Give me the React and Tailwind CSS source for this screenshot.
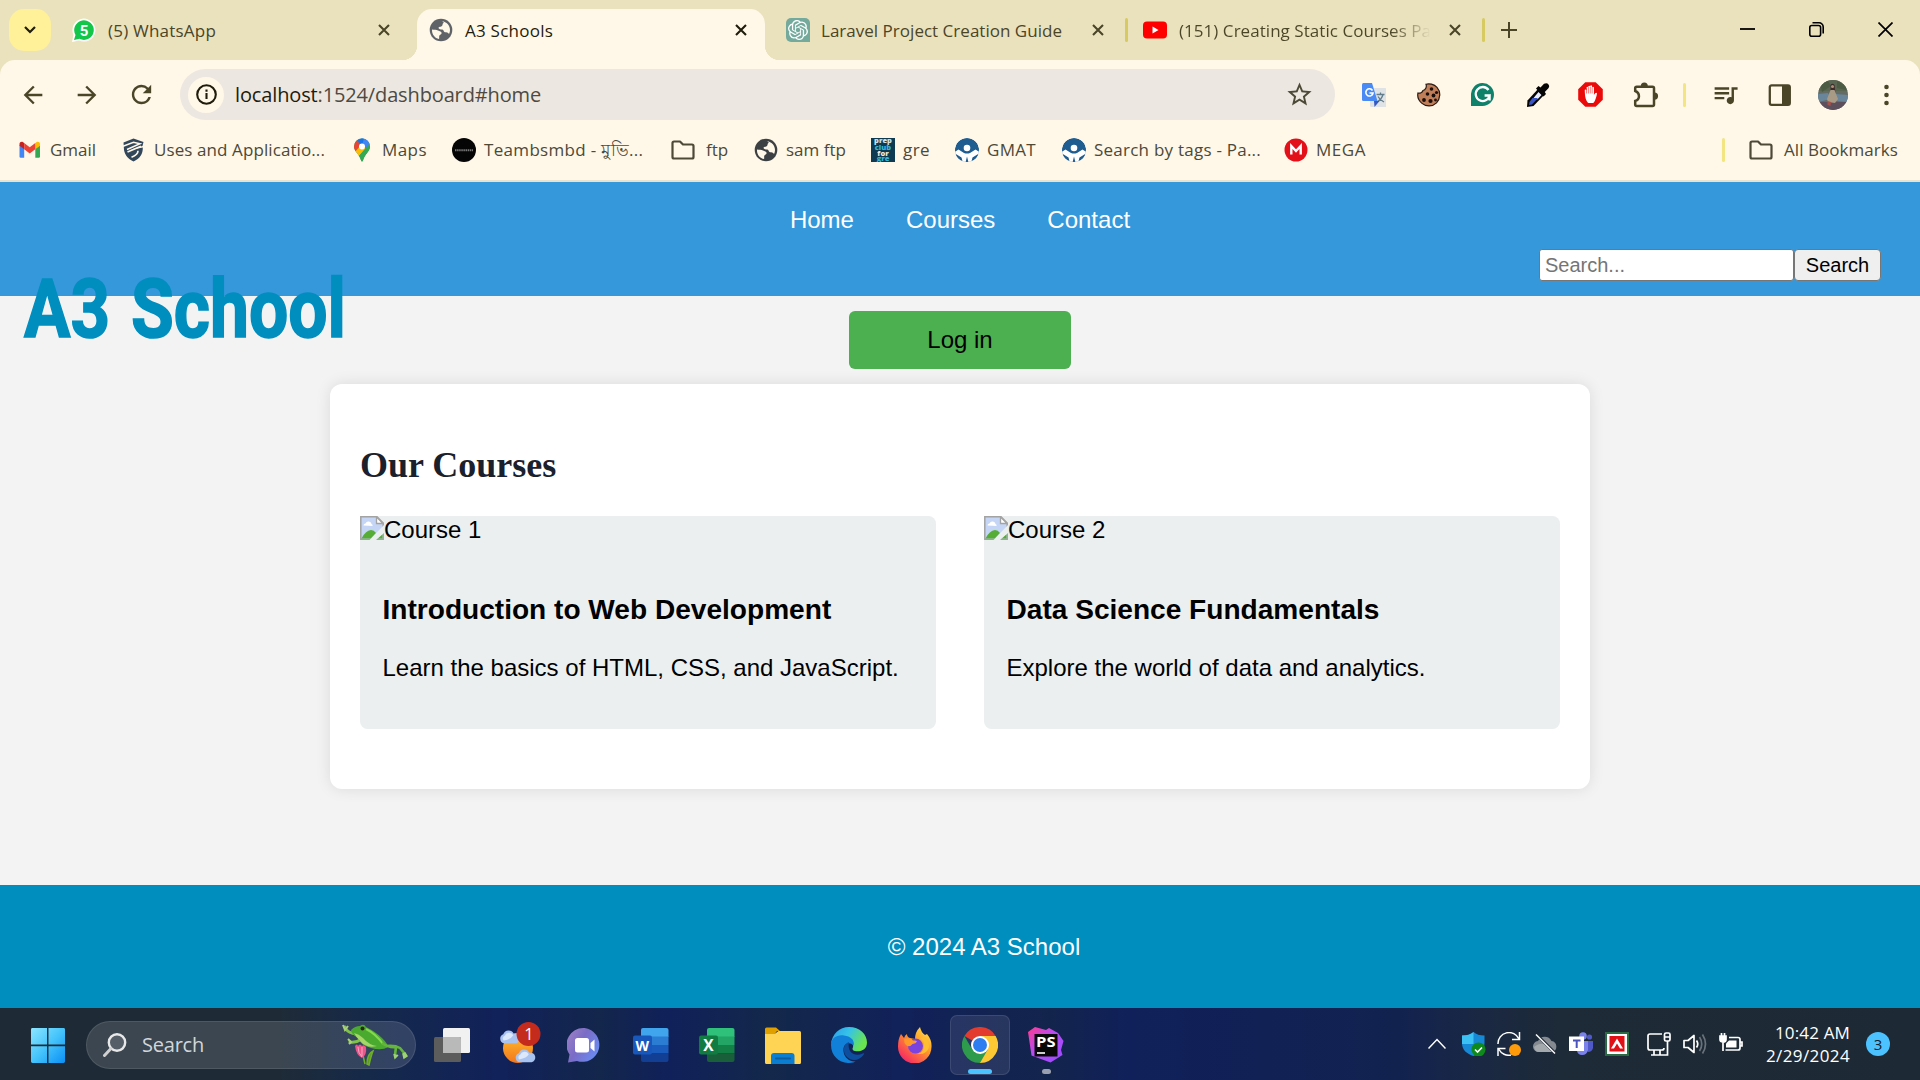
import React, { useLayoutEffect, useRef } from "react";
import {
  MdArrowBack,
  MdArrowForward,
  MdRefresh,
  MdStarBorder,
  MdQueueMusic,
} from "react-icons/md";
import { SiOpenai } from "react-icons/si";

/* Single line of text whose tracking is adjusted so that it spans `w` pixels. */
function Line({ w, className = "", children }) {
  const ref = useRef(null);
  useLayoutEffect(() => {
    const el = ref.current;
    el.style.letterSpacing = "0px";
    const natural = el.getBoundingClientRect().width;
    const count = Array.from(el.textContent).length;
    el.style.letterSpacing = (w - natural) / count + "px";
  }, [w]);
  return (
    <span ref={ref} className={"inline-block whitespace-nowrap " + className}>
      {children}
    </span>
  );
}

function Cross({ className = "", dark }) {
  return (
    <svg className={"h-3 w-3 shrink-0 " + className} viewBox="0 0 12 12" fill="none">
      <path d="M1 1l10 10M11 1L1 11" stroke={dark ? "#1f1c0c" : "#4b4528"} strokeWidth="2.1" />
    </svg>
  );
}

function Globe({ color, hole }) {
  return (
    <svg className="h-6 w-6 shrink-0" viewBox="0 0 24 24">
      <circle cx="12" cy="12" r="11.300" fill={color} />
      <path d="M13 3.200c4.500.5 8 4 8 8.800 0 1.500-.5 3-1 4-1-1.800-2.500-1.500-4-1.700-1.500-.3-1-2.300-2.700-2.700-1.800-.3-3.300-.3-3.800-1.600 0-1.600 2.500-1 3.500-2 .8-1 .3-2.300 1.500-3 .8-.5-.3-1.300-1.500-1.800z" fill={hole} />
      <path d="M3 11.500c2 .3 4.500 0 6 1 1.600 1 3.500.8 3.600 2.500 0 1.500-1.800 1.500-2.300 2.700-.4 1.200.2 2.300-.3 3.300-4-.8-7.300-4.500-7-9.500z" fill={hole} />
    </svg>
  );
}

function Folder() {
  return (
    <svg className="h-6 w-6 shrink-0" viewBox="0 0 24 24" fill="none">
      <path
        d="M1.500 5q0-1.500 1.500-1.500h6l3 3h9q1.500 0 1.500 1.500v11q0 1.500-1.500 1.500H3q-1.500 0-1.500-1.500z"
        stroke="#4d4937"
        strokeWidth="2.2"
        strokeLinejoin="round"
      />
    </svg>
  );
}

function GmailIcon() {
  return (
    <svg className="h-6 w-6 shrink-0" viewBox="0 0 24 24">
      <path d="M1.500 7v11.500q0 1.200 1.200 1.200H6.200V10.500z" fill="#4285f4" />
      <path d="M22 7v11.500q0 1.200-1.200 1.200H17.300V10.500z" fill="#34a853" />
      <path d="M17.300 5v6.200L22 7.700V6c0-2.200-2.400-2.700-3.600-1.800z" fill="#fbbc04" />
      <path d="M6.200 5v6.200L1.500 7.700V6c0-2.200 2.400-2.700 3.600-1.800z" fill="#c5221f" />
      <path d="M6.200 11.200V5l5.500 4.200L17.300 5v6.200l-5.600 4.200z" fill="#ea4335" />
    </svg>
  );
}

function ShieldBookmark() {
  return (
    <svg className="h-6 w-6 shrink-0" viewBox="0 0 24 24" fill="none">
      <path d="M1.500 4.500L11.500 .5 21.500 4l-1 4L8 12l12.800-2.500c.2 6.500-2.800 11-9.300 14-5-2.500-8.500-6-9.500-11.500z" fill="#33475b" />
      <path d="M1 8.200L11.500 4.300l6.500 1.500L5 11.500" stroke="#fff7e8" strokeWidth="1.500" />
      <path d="M19 8.200L5.500 14M16 12.800q0 4-6.500 6.500" stroke="#fff7e8" strokeWidth="1.700" />
    </svg>
  );
}

function MapsPin() {
  return (
    <svg className="h-6 w-6 shrink-0" viewBox="0 0 24 24">
      <defs>
        <clipPath id="pin">
          <path d="M12 0.500a8 8 0 0 1 8 8c0 5-5 7-7 13.700q-1 2.600-2 0C9 15.500 4 13.500 4 8.500a8 8 0 0 1 8-8z" />
        </clipPath>
      </defs>
      <g clipPath="url(#pin)">
        <rect width="24" height="24" fill="#34a853" />
        <path d="M6 0L20 0 22 5 13 12z" fill="#4285f4" />
        <path d="M3 0L7 2.500 12 8 3 18z" fill="#ea4335" />
        <path d="M7 2.500L12 0h2L12 8z" fill="#1a73e8" />
        <path d="M3 16l8-9 5 4-9 9z" fill="#fbbc04" />
        <path d="M8 19L20 5v20H9z" fill="#34a853" />
        <circle cx="12" cy="8.500" r="3" fill="#fff" />
      </g>
    </svg>
  );
}

function TeamIcon() {
  return (
    <svg className="h-6 w-6 shrink-0" viewBox="0 0 24 24">
      <circle cx="12" cy="12" r="12" fill="#050505" />
      <path d="M3 12.200h18" stroke="#777" strokeWidth="2" strokeDasharray="1.500 .6" />
    </svg>
  );
}

function GreIcon() {
  return (
    <svg className="h-6 w-6 shrink-0" viewBox="0 0 24 24" fontFamily="Open Sans" fontWeight="800" fontSize="7.500" textAnchor="middle">
      <rect width="24" height="24" fill="#0e3a52" />
      <text x="12" y="5" fill="#cfe0e4">prep</text>
      <text x="12" y="11.500" fill="#35b4d8">club</text>
      <text x="12" y="17.500" fill="#e4ecdf">for</text>
      <text x="12" y="22.500" fill="#35b4d8">gre</text>
    </svg>
  );
}

function GmatIcon() {
  return (
    <svg className="h-6 w-6 shrink-0" viewBox="0 0 24 24">
      <defs>
        <clipPath id="gm">
          <circle cx="12" cy="12" r="12" />
        </clipPath>
      </defs>
      <g clipPath="url(#gm)">
        <circle cx="12" cy="12" r="12" fill="#1f5c8f" />
        <circle cx="12" cy="10" r="3.300" fill="#fff" />
        <path d="M-1 14.500l4.500-3L9 15q3 1.200 6 0l5.500-3.500 4.500 3V15l-7.500 4.500L16 25H8l-1.500-5.500L-1 15z" fill="#fff" />
        <path d="M-1 15.500l7 4.500.5 5H-1zM25 15.500L18 20l-.5 5H25z" fill="#1f5c8f" />
        <path d="M12 18.500l1.500 6h-3z" fill="#1f5c8f" />
      </g>
    </svg>
  );
}

function MegaIcon() {
  return (
    <svg className="h-6 w-6 shrink-0" viewBox="0 0 24 24">
      <circle cx="12" cy="12" r="11.500" fill="#e3101a" />
      <path d="M7.300 16.500V8l4.700 5 4.700-5v8.500" fill="none" stroke="#fff" strokeWidth="2.400" />
    </svg>
  );
}

const bookmarks = [
  { icon: <GmailIcon />, box: "w-[104px]", label: "Gmail", w: 46 },
  { icon: <ShieldBookmark />, box: "w-[228px]", label: "Uses and Applicatio...", w: 171 },
  { icon: <MapsPin />, box: "w-[102px]", label: "Maps", w: 45 },
  { icon: <TeamIcon />, box: "w-[219px]", label: "Teambsmbd - মুভি...", w: 160 },
  { icon: <Folder />, box: "w-[83px]", label: "ftp", w: 22, gap: "gap-[11px]" },
  { icon: <Globe color="#3c4043" hole="#fff8e9" />, box: "w-[117px]", label: "sam ftp", w: 60 },
  { icon: <GreIcon />, box: "w-[84px]", label: "gre", w: 27 },
  { icon: <GmatIcon />, box: "w-[107px]", label: "GMAT", w: 49 },
  { icon: <GmatIcon />, box: "w-[222px]", label: "Search by tags - Pa...", w: 167 },
  { icon: <MegaIcon />, box: "w-[120px]", label: "MEGA", w: 50 },
];

function TabStrip() {
  return (
    <div className="flex h-[60px] bg-[#eae2bd] text-[17px] text-[#4b4528]">
      <div className="mt-[9px] ml-[9px] flex h-[42px] w-[42px] items-center justify-center rounded-[15px] bg-[#fff09a]">
        <svg className="h-3 w-3" viewBox="0 0 12 12" fill="none">
          <path d="M1 3l5 5 5-5" stroke="#1f1c0c" strokeWidth="2.200" />
        </svg>
      </div>
      <div className="flex w-[366px] items-center pl-[21px]">
        <svg className="h-6 w-6 shrink-0" viewBox="0 0 24 24">
          <path d="M0 24L1.500 17A11.500 11.500 0 1 1 7 22.500z" fill="#fff" />
          <path d="M2 22L3.500 17A9.800 9.800 0 1 1 7.500 20.800z" fill="#13c648" />
          <text x="12" y="17.500" textAnchor="middle" fontSize="15" fontWeight="700" fontFamily="Roboto" fill="#fff">5</text>
        </svg>
        <span className="ml-3 flex-1 pt-[2px]"><Line w={108}>(5) WhatsApp</Line></span>
        <Cross className="mr-[27px]" />
      </div>
      <div className="relative mt-[9px] flex w-[348px] items-center rounded-t-[15px] bg-[#fff8e9] pb-[9px] pl-[12px] text-[#1f1c0c]">
        <span className="absolute bottom-0 -left-[15px] h-[15px] w-[15px] bg-[radial-gradient(circle_at_0_0,transparent_15px,#fff8e9_15.5px)]" />
        <span className="absolute -right-[15px] bottom-0 h-[15px] w-[15px] bg-[radial-gradient(circle_at_100%_0,transparent_15px,#fff8e9_15.5px)]" />
        <Globe color="#5f6368" hole="#fff8e9" />
        <span className="ml-[12px] flex-1 pt-[2px]"><Line w={88}>A3 Schools</Line></span>
        <Cross className="mr-[18px]" dark />
      </div>
      <div className="flex w-[363px] items-center pl-[21px]">
        <span className="flex h-6 w-6 shrink-0 items-center justify-center rounded-l-[5px] rounded-tr-[5px] bg-[#74aa9c]">
          <SiOpenai className="h-5 w-5 text-white" />
        </span>
        <span className="ml-[11px] flex-1 pt-[2px]"><Line w={241}>Laravel Project Creation Guide</Line></span>
        <Cross className="mr-[21px]" />
        <span className="h-6 w-[3px] rounded bg-[#d8ca62]" />
      </div>
      <div className="flex w-[357px] items-center pl-[15px]">
        <svg className="h-6 w-6 shrink-0" viewBox="0 0 24 24">
          <rect y="3.500" width="24" height="17" rx="4" fill="#f00" />
          <path d="M9.500 8.500v7l6-3.500z" fill="#fff" />
        </svg>
        <span className="ml-3 w-[252px] overflow-hidden bg-[linear-gradient(90deg,#4b4528_84%,transparent_100%)] bg-clip-text pt-[2px] text-transparent">
          <Line w={252}>(151) Creating Static Courses Pa</Line>
        </span>
        <Cross className="ml-[18px]" />
        <span className="ml-[21px] h-6 w-[3px] rounded bg-[#d8ca62]" />
      </div>
      <svg className="mt-[22px] ml-[16px] h-4 w-4" viewBox="0 0 16 16">
        <path d="M8 0v16M0 8h16" stroke="#4b4528" strokeWidth="2" />
      </svg>
      <div className="ml-auto flex h-[58px] items-center gap-[54px] pr-[27px]">
        <svg className="h-[15px] w-[15px]" viewBox="0 0 15 15"><path d="M0 7h15" stroke="#000" strokeWidth="1.800" /></svg>
        <svg className="h-[15px] w-[15px] overflow-visible" viewBox="0 0 15 15" fill="none" stroke="#000" strokeWidth="1.600">
          <rect x=".8" y="3.500" width="10.800" height="10.800" rx="2" />
          <path d="M3.500 .8H10a4.200 4.200 0 0 1 4.200 4.200v6.500" />
        </svg>
        <svg className="h-[15px] w-[15px]" viewBox="0 0 15 15"><path d="M.5 .5l14 14M14.500 .5l-14 14" stroke="#000" strokeWidth="1.700" /></svg>
      </div>
    </div>
  );
}

function Extensions() {
  return (
    <>
      <svg className="ml-[27px] h-6 w-6 shrink-0" viewBox="0 0 24 24">
        <rect x="8" y="5" width="16.500" height="19" rx="1.500" fill="#dfe3e6" />
        <path d="M14.500 11.500h8M18.500 9.500v2M21 11.500c-1 4-3.500 6-6 7.500M16 13.500c1 2 3 4 6 5.500" stroke="#607d8b" strokeWidth="1.300" fill="none" />
        <path d="M1.500 0H10l5.500 18H1.500Q0 18 0 16.500v-15Q0 0 1.500 0z" fill="#4a8af4" />
        <path d="M12 18h5.500l-5 6z" fill="#3457c0" />
        <path d="M10.500 7.500A3.600 3.600 0 1 0 11 10H7.500" stroke="#fff" strokeWidth="1.600" fill="none" />
      </svg>
      <svg className="ml-[31px] h-6 w-6 shrink-0" viewBox="0 0 24 24">
        <path d="M9 1.200c3-1 8-.2 11 3.200 4 4.500 3.500 11-.5 15.500-4 4-10.500 4-14.500.5C1 17 .3 13 1 10c2 .5 4.500-.5 5-2.500C8.500 7 10 4 9 1.200z" fill="#c07f58" stroke="#2a1a14" strokeWidth="1.200" />
        <g fill="#1a0f0b">
          <circle cx="14.500" cy="6" r="1.800" /><circle cx="19.500" cy="9.500" r="1.600" /><circle cx="10.500" cy="11" r="1.800" />
          <circle cx="16.500" cy="12.500" r="1.900" /><circle cx="7" cy="17" r="1.900" /><circle cx="13.500" cy="18" r="2.100" /><circle cx="18.500" cy="17" r="1.400" />
        </g>
      </svg>
      <svg className="ml-[30px] h-6 w-6 shrink-0" viewBox="0 0 24 24">
        <path d="M0 23V12A11.500 11.500 0 1 1 11.500 23z" fill="#0f806a" />
        <path d="M17.500 7A7 7 0 1 0 18.600 12.500h-5M18.600 12.500v5" stroke="#fff" strokeWidth="2.300" fill="none" />
      </svg>
      <svg className="ml-[31px] h-6 w-6 shrink-0" viewBox="0 0 24 24">
        <path d="M12.500 5.500l6 6-11 11.500L1 24l.5-6.500z" fill="#050505" />
        <path d="M12.500 9l3 3-4 4.200H6.500z" fill="#e8ecff" />
        <path d="M6.500 15h5.500L6 21.500l-3 .5.500-3z" fill="#3a55c8" />
        <path d="M10 5.500L12.500 3l2 1.500L18 .8q3-1.500 4.500.7 1.500 2-.3 4L18.800 9l1.200 2-2.500 2.500z" fill="#050505" />
      </svg>
      <svg className="ml-[28px] h-[25px] w-[25px] shrink-0" viewBox="0 0 24 24">
        <path d="M7 .2h10L23.800 7v10L17 23.800H7L.2 17V7z" fill="#ea0a0a" />
        <path d="M6.500 7.500q1.200-.8 1.700.3V5q.9-1 1.700 0V4q1-1 1.800 0v-.3q1-1 1.800 0V5q1-1 1.800 0v7.500q1.500-2.800 3-1.800c-.5 3-1.800 8-3.800 9.500H10C7.500 18.500 6.500 14 6.500 7.500z" fill="#fff" />
        <path d="M8.200 6v5M10 5v6M11.800 4.500v6.500M13.600 5v6" stroke="#ea0a0a" strokeWidth=".5" />
      </svg>
      <svg className="ml-[30px] h-[26px] w-[27px] shrink-0" viewBox="0 0 27 26" fill="none">
        <path d="M2.200 9V6.200q0-1.500 1.500-1.500H19.500q1.500 0 1.500 1.500V22.500q0 1.500-1.500 1.500H3.700q-1.500 0-1.500-1.500V19c5-1.500 5-8 0-10z" stroke="#4b4528" strokeWidth="2.500" />
        <path d="M7.800 4a3.500 3.500 0 0 1 7 0zM21.500 10.500a3.600 3.600 0 0 1 0 7.200z" fill="#4b4528" />
      </svg>
      <span className="ml-[23px] h-6 w-[3px] shrink-0 rounded bg-[#f2e582]" />
      <MdQueueMusic className="ml-[25px] h-[29px] w-[29px] shrink-0 text-[#4b4528]" />
      <svg className="ml-[28px] h-6 w-6 shrink-0" viewBox="0 0 24 24" fill="none">
        <rect x="1.800" y="2.300" width="20" height="19.500" rx="1.800" stroke="#4b4528" strokeWidth="2.300" />
        <path d="M14 2.500h7.500v19H14z" fill="#4b4528" />
      </svg>
      <svg className="ml-[26px] h-[30px] w-[30px] shrink-0" viewBox="0 0 30 30">
        <defs>
          <clipPath id="av"><circle cx="15" cy="15" r="15" /></clipPath>
        </defs>
        <g clipPath="url(#av)">
          <rect width="30" height="30" fill="#636b62" />
          <path d="M0 0h30v11H0z" fill="#5a6652" />
          <path d="M2 3l8-2 3 5-9 6zM19 1l9 4v5l-9-2z" fill="#4c5c44" />
          <path d="M0 14l10-1 3 6-13 3zM18 14l12 1v7l-12-1z" fill="#68859a" />
          <path d="M0 22h30v8H0z" fill="#5d4f5c" />
          <path d="M12.500 5q2-2.500 4 0l1 9h-5z" fill="#3c2b2a" />
          <circle cx="14.500" cy="6.500" r="1.500" fill="#b58d75" />
          <path d="M12.500 10h4l3.500 9-3 4-7-1-1-3z" fill="#a99a86" />
          <path d="M9.500 21l3.500 1-.5 4-3-1z" fill="#a4524a" />
        </g>
      </svg>
      <svg className="ml-[36px] h-6 w-[5px] shrink-0" viewBox="0 0 5 24" fill="#4b4528">
        <circle cx="2.500" cy="4" r="2.300" /><circle cx="2.500" cy="12" r="2.300" /><circle cx="2.500" cy="20" r="2.300" />
      </svg>
    </>
  );
}

function Toolbar() {
  return (
    <div className="flex h-[60px] items-start bg-[#eae2bd]">
      <div className="flex h-[60px] w-full items-center rounded-t-[15px] bg-[#fff8e9] pt-[9px]">
        <MdArrowBack className="ml-[19px] h-[28px] w-[28px] shrink-0 text-[#4b4528]" />
        <MdArrowForward className="ml-[26px] h-[28px] w-[28px] shrink-0 text-[#4b4528]" />
        <MdRefresh className="ml-[26px] h-[29px] w-[29px] shrink-0 text-[#4b4528]" />
        <div className="ml-[24px] flex h-[51px] w-[1155px] shrink-0 items-center rounded-full bg-[#ece7e0]">
          <span className="ml-2 flex h-9 w-9 items-center justify-center rounded-full bg-[#fff8e9]">
            <svg className="h-[21px] w-[21px]" viewBox="0 0 21 21" fill="none">
              <circle cx="10.500" cy="10.500" r="9.300" stroke="#1f1c0c" strokeWidth="2.100" />
              <path d="M10.500 9v6M10.500 5.500v2.200" stroke="#1f1c0c" strokeWidth="2.100" />
            </svg>
          </span>
          <span className="ml-[11px] flex-1 text-[20px] text-[#4d4a44]">
            <Line w={306}><span className="text-[#1f1c0c]">localhost</span>:1524/dashboard#home</Line>
          </span>
          <MdStarBorder className="mr-[21px] h-[29px] w-[29px] text-[#4d4937]" />
        </div>
        <Extensions />
      </div>
    </div>
  );
}

function Bookmarks() {
  return (
    <div className="flex h-[62px] items-center border-b-2 border-[#e8e2cf] bg-[#fff8e9] pl-[18px] text-[17px] text-[#4d4937]">
      {bookmarks.map((b, i) => (
        <div key={i} className={"flex shrink-0 items-center " + b.box + " " + (b.gap || "gap-[8px]")}>
          {b.icon}
          <Line w={b.w}>{b.label}</Line>
        </div>
      ))}
      <span className="ml-auto h-6 w-[3px] rounded bg-[#f2e582]" />
      <div className="ml-[24px] flex items-center gap-[11px] pr-[22px]">
        <Folder />
        <Line w={114}>All Bookmarks</Line>
      </div>
    </div>
  );
}

function BrokenImage() {
  return (
    <svg className="h-6 w-6 shrink-0" viewBox="0 0 24 24">
      <path d="M.8 .8H17l6.200 6.200v16.200H.8z" fill="#c5d5f5" stroke="#a3a3a3" strokeWidth="1.500" />
      <path d="M16.500 1v6.500H23z" fill="#fff" stroke="#a3a3a3" strokeWidth="1.300" />
      <path d="M3.500 9.500q0-2 2-2 1-2.500 3.500-2t2.500 2.500q1.500.5 1 2z" fill="#fff" />
      <path d="M1.500 22.500q4-8 9.500-8.500 3 0 5 3l-5 5.500zM16.500 22.500l6-4.500v4.500z" fill="#55ad35" />
      <path d="M24 9L9.500 24H16L24 17z" fill="#ebeff0" />
    </svg>
  );
}

function Course({ alt, title, text }) {
  return (
    <div className="h-[213px] w-[576px] rounded-[7.5px] bg-[#ebeff0]">
      <div className="flex h-6 leading-[27px]">
        <BrokenImage />
        {alt}
      </div>
      <h3 className="mt-[54px] pl-[22.5px] text-[28.08px] leading-[32px] font-bold">{title}</h3>
      <p className="mt-[28px] pl-[22.5px] leading-[28px]">{text}</p>
    </div>
  );
}

function Page() {
  return (
    <div className="relative flex h-[826px] flex-col items-center bg-[#f3f3f3] font-['Liberation_Sans',Arial,sans-serif] text-[24px] leading-[28px] text-black">
      <header className="flex h-[114px] w-full flex-col items-center bg-[#3498db]">
        <nav className="mt-[24px] flex gap-[52px] text-white">
          <span>Home</span>
          <span>Courses</span>
          <span>Contact</span>
        </nav>
        <div className="mt-[15px] mr-[39px] flex h-[32px] self-end text-[20px] leading-[31px]">
          <div className="w-[255px] rounded-[3px] border-[1.5px] border-[#767676] bg-white pl-[5px] text-[#757575]">Search...</div>
          <div className="w-[87px] rounded-[4px] border-[1.5px] border-[#767676] bg-[#efefef] text-center">Search</div>
        </div>
      </header>
      <svg
        className="absolute top-[70px] left-0 h-[110px] w-[360px] overflow-visible"
        viewBox="0 -10 360 110"
        fill="#008ebf"
        stroke="#008ebf"
        strokeWidth="1.600"
        fontFamily="Roboto, sans-serif"
        fontWeight="700"
        fontSize="82"
      >
        <text x="24" y="75" textLength="86" lengthAdjust="spacingAndGlyphs">A3</text>
        <text x="131" y="75" textLength="215" lengthAdjust="spacingAndGlyphs">School</text>
      </svg>
      <div className="mt-[15px] flex h-[58px] w-[222px] items-center justify-center rounded-[6px] bg-[#4caf50]">Log in</div>
      <main className="mt-[15px] h-[405px] w-[1260px] rounded-[12px] bg-white px-[30px] shadow-[0_0_15px_rgba(0,0,0,0.1)]">
        <h2 className="mt-[60px] font-['Liberation_Serif','Times_New_Roman',serif] text-[36px] leading-[42px] font-bold text-[#1a202c]">Our Courses</h2>
        <div className="mt-[30px] flex gap-[48px]">
          <Course alt="Course 1" title="Introduction to Web Development" text="Learn the basics of HTML, CSS, and JavaScript." />
          <Course alt="Course 2" title="Data Science Fundamentals" text="Explore the world of data and analytics." />
        </div>
      </main>
      <footer className="mt-auto flex h-[123px] w-full items-center justify-center bg-[#008ebf] pl-[48px] text-white">© 2024 A3 School</footer>
    </div>
  );
}

function Frog() {
  return (
    <svg className="h-[42px] w-[66px] shrink-0" viewBox="0 0 66 42">
      <path d="M23 40L20 27M27 41q2-9 4-14-6 3-6 13z" fill="#5d9a21" stroke="#6fae2a" strokeWidth="1.500" />
      <path d="M13 22q2-3 3 0 2-3 4 0 2-2 4 1 1 8-4 11-6-3-7-12z" fill="#e9568a" />
      <path d="M16 23q0 6 4 10M20 23v9" stroke="#f7a6c3" strokeWidth="1" fill="none" />
      <path d="M3 3q2 5 7 6t9 3M8 18q6 1 12-3" stroke="#7fc24b" strokeWidth="3" fill="none" strokeLinecap="round" />
      <path d="M1 1l2 5 3-4M6 15l3 3-2 2" stroke="#a9cf7a" strokeWidth="2" fill="none" />
      <path d="M9 6q4-4 9-4 4-3 6 1 10 5 16 11t6 9q-6 4-17 1T16 14Q9 10 9 6z" fill="#4aa92f" />
      <path d="M12 9q5 1 9 5 6 7 14 8-10 3-17-5-4-4-6-8z" fill="#a5d66c" />
      <path d="M24 5q10 5 17 15" stroke="#86d84e" strokeWidth="2" fill="none" />
      <circle cx="20.500" cy="4.500" r="2" fill="#2b2a17" />
      <path d="M40 19q7 5 14 4l-1 8M44 22q9-1 14 2l5 6" stroke="#63b63a" strokeWidth="2.600" fill="none" strokeLinejoin="round" />
      <path d="M52 30l1 4 3-3M61 30l1 4 3-2-2-3z" fill="#9fd277" stroke="#9fd277" strokeWidth="1.500" />
    </svg>
  );
}

function Cloud({ x, y, s }) {
  return (
    <g transform={`translate(${x} ${y}) scale(${s})`}>
      <path d="M5 14a5 5 0 0 1-.5-9.500A6 6 0 0 1 15.500 4a5 5 0 0 1 2.500 10z" fill="#a9c3f0" />
      <path d="M5 11a3 3 0 0 1 1-5A5 5 0 0 1 15 5.500q-2 4-10 5.500z" fill="#dde8fb" />
    </g>
  );
}

function Office({ letter, c, badge }) {
  return (
    <svg className="h-9 w-9 shrink-0" viewBox="0 0 36 36">
      <path d="M8 3q0-2 2-2h23.500q2 0 2 2v7H8z" fill={c[0]} />
      <path d="M8 9.500h27.500V18H8z" fill={c[1]} />
      <path d="M8 18h27.500v8.500H8z" fill={c[2]} />
      <path d="M8 26.500h27.500V33q0 2-2 2H10q-2 0-2-2z" fill={c[3]} />
      <rect y="8.500" width="19" height="19" rx="2" fill={badge} />
      <text x="9.300" y="23.500" textAnchor="middle" fontFamily="Open Sans" fontWeight="700" fontSize={letter === "W" ? "14" : "15.500"} fill="#fff">{letter}</text>
    </svg>
  );
}

function Taskbar() {
  return (
    <div className="flex h-[72px] items-center bg-[linear-gradient(90deg,#1e2b36_0px,#1e2b37_280px,#15294a_370px,#11215a_500px,#13264b_600px,#10205a_670px,#13284a_770px,#11215a_900px,#13244c_1050px,#10205a_1130px,#12224f_1400px,#1a2843_1480px,#1d2a37_1560px,#1d2a36_1920px)] text-white">
      <div className="flex shrink-0 items-center pt-[2px]">
        <svg className="ml-[31px] h-[35px] w-[34px] shrink-0" viewBox="0 0 35 36">
          <defs>
            <linearGradient id="win" x1="0" y1="0" x2="1" y2="1">
              <stop offset="0" stopColor="#8de6ff" /><stop offset=".5" stopColor="#45c4fb" /><stop offset="1" stopColor="#0a90f5" />
            </linearGradient>
          </defs>
          <path d="M1.500 0H16.500V17H0V1.500Q0 0 1.500 0zM18 0H33.500Q35 0 35 1.500V17H18zM0 18.700H16.500V36H1.500Q0 36 0 34.500zM18 18.700H35V34.500Q35 36 33.500 36H18z" fill="url(#win)" />
        </svg>
        <div className="ml-[21px] flex h-[48px] w-[330px] shrink-0 items-center rounded-full border border-white/10 bg-white/[0.13]">
          <svg className="ml-[16px] h-[24px] w-[24px]" viewBox="0 0 24 24" fill="none">
            <circle cx="14" cy="9.500" r="8.200" stroke="#e8e8e8" strokeWidth="2.400" fill="#ffffff22" />
            <path d="M8 15.500L1.500 22.500" stroke="#d0d0d0" strokeWidth="3" strokeLinecap="round" />
          </svg>
          <span className="ml-[15px] flex-1 text-[20px] text-[#d3d6d9]"><Line w={62}>Search</Line></span>
          <div className="mr-[7px]"><Frog /></div>
        </div>
        <svg className="ml-[18px] h-9 w-9 shrink-0" viewBox="0 0 36 36">
          <rect x="9" y="1" width="27" height="25" rx="1.500" fill="#f1f1f1" />
          <rect y="10" width="27" height="25" rx="1.500" fill="#5c5c5c" />
          <path d="M9 10h16.500q1.500 0 1.500 1.500V26H9z" fill="#b9b9b9" />
        </svg>
        <svg className="-mt-[3px] ml-[30px] h-[44px] w-[44px] shrink-0" viewBox="0 0 44 44">
          <defs>
            <linearGradient id="sun" x1="0" y1="0" x2="0" y2="1"><stop offset="0" stopColor="#ffc02e" /><stop offset="1" stopColor="#f3761e" /></linearGradient>
          </defs>
          <circle cx="18" cy="26" r="15" fill="url(#sun)" />
          <Cloud x="-1" y="8" s="0.950" />
          <Cloud x="14.500" y="27" s="0.950" />
          <circle cx="28.500" cy="12" r="12" fill="#c42b1c" />
          <text x="29" y="18" textAnchor="middle" fontFamily="Open Sans" fontSize="16.500" fill="#fff">1</text>
        </svg>
        <svg className="ml-[23px] h-[36px] w-[36px] shrink-0" viewBox="0 0 36 36">
          <defs>
            <linearGradient id="chat" x1="0" y1="0" x2="1" y2=".6"><stop offset="0" stopColor="#a184c4" /><stop offset=".5" stopColor="#7a6cc6" /><stop offset="1" stopColor="#6a8af0" /></linearGradient>
          </defs>
          <path d="M17.500 1a17 17 0 1 1-7.500 33L1 35.500l1.500-8A17 17 0 0 1 17.500 1z" fill="url(#chat)" />
          <rect x="8" y="11" width="14" height="14.500" rx="2.500" fill="#fff" />
          <path d="M23.500 16l4-3.500v12l-4-3.500z" fill="#fff" />
        </svg>
        <div className="ml-[30px]"><Office letter="W" c={["#41a5ee", "#2b7cd3", "#1a5cbe", "#123f93"]} badge="#1858bd" /></div>
        <div className="ml-[30px]"><Office letter="X" c={["#2fc07a", "#22a565", "#138046", "#19603a"]} badge="#117c41" /></div>
        <svg className="ml-[30px] h-[37px] w-[36px] shrink-0" viewBox="0 0 36 37">
          <path d="M0 2Q0 .5 1.500 .5H11l4 3.500h-3L9 8H0z" fill="#e0a000" />
          <path d="M0 7h9.500l4-3H34.500Q36 4 36 5.500V35.500Q36 37 34.500 37H1.500Q0 37 0 35.500z" fill="#ffd353" />
          <path d="M6 37v-8q0-3 3-3h17.500q3 0 3 3v8z" fill="#0b7ed2" />
          <path d="M11 31.500h14" stroke="#0a5ca3" strokeWidth="2" strokeLinecap="round" />
        </svg>
        <svg className="ml-[30px] h-[36px] w-[36px] shrink-0" viewBox="0 0 36 36">
          <defs>
            <linearGradient id="ed" x1="0" y1="0" x2="1" y2=".4"><stop offset="0" stopColor="#2c9bea" /><stop offset=".5" stopColor="#36c3e8" /><stop offset="1" stopColor="#69e54f" /></linearGradient>
          </defs>
          <path d="M0 17C1 7 8.500 0 18 0c11 0 18 7.500 18 15.500 0 6-4.500 8.800-9.500 8.800-4 0-6-1.500-4.500-4C23 17 20 12.500 14 12 6 11 1 14 0 17z" fill="url(#ed)" />
          <path d="M0 18C0 11 6 7.500 13 8.500c8 1 11 6 9.500 10-5-5-11-1-10 6C13.500 32 21 36 26 34 14 40 0 32 0 18z" fill="#1080d8" />
          <path d="M18 15c-6 2-7 10-2 15 5 5 13 3.500 16.800-2.500.6-1-.3-1.400-1-1-9 4-16-2-13.800-11.500z" fill="#0d4f9e" />
        </svg>
        <svg className="ml-[30px] h-[36px] w-[36px] shrink-0" viewBox="0 0 36 36">
          <defs>
            <linearGradient id="ff" x1="1" y1="0" x2=".2" y2="1"><stop offset="0" stopColor="#fff14a" /><stop offset=".45" stopColor="#ff9a28" /><stop offset="1" stopColor="#f5206a" /></linearGradient>
          </defs>
          <path d="M4 7l3 4q1-3 3-4 0 3 3 4l5 1q0-7 5-12 1 5 5 8l2-1q5 6 4.500 13A16.500 16.500 0 0 1 1 19.500Q1 12 4 7z" fill="url(#ff)" />
          <circle cx="18.500" cy="19" r="7.500" fill="#7a43e0" />
          <path d="M7 12q6-2 9 1.500 3-.5 4 1-1 2-4.500 2.500-3 4-6.500 1-2-2-2-6z" fill="#ff9a2a" />
          <path d="M23 11q5 3 4 9-1 6-7 7 10 1 12-7 0-6-5-10z" fill="#ffbe32" />
        </svg>
        <div className="ml-[17px] flex h-[60px] w-[60px] shrink-0 flex-col items-center rounded-[7px] border border-white/10 bg-white/[0.09] pt-[11px]">
          <svg className="h-[36px] w-[36px]" viewBox="0 0 36 36">
            <path d="M18 18L2.400 9A18 18 0 0 1 33.600 9z" fill="#e33b2e" />
            <path d="M18 9H33.600A18 18 0 0 1 18 36z" fill="#fcc934" />
            <path d="M2.400 9L10.200 22.500 18 27l7.800-4.500L18 36A18 18 0 0 1 2.400 9z" fill="#2d9b4b" />
            <circle cx="18" cy="18" r="9" fill="#fff" />
            <circle cx="18" cy="18" r="7" fill="#2d7cf0" />
          </svg>
          <span className="mt-[6px] h-[5px] w-6 rounded-full bg-[#4cc2ff]" />
        </div>
        <div className="ml-[17px] flex h-[60px] w-[38px] shrink-0 flex-col items-center pt-[12px]">
          <svg className="h-[36px] w-[36px]" viewBox="0 0 36 36">
            <defs>
              <linearGradient id="ps" x1="0" y1="0" x2="1" y2="1"><stop offset="0" stopColor="#ff3b8d" /><stop offset=".45" stopColor="#b44cf5" /><stop offset="1" stopColor="#9a4bff" /></linearGradient>
            </defs>
            <path d="M0 5L7 0l11 3 3-2 9 5 5.500 8-2.500 9 1.500 5-12 7.500-11-4-8-3z" fill="url(#ps)" />
            <rect x="6.500" y="7" width="23" height="22.500" fill="#080808" />
            <text x="8" y="20" fontFamily="Open Sans" fontWeight="700" fontSize="14.500" textLength="19.500" lengthAdjust="spacingAndGlyphs" fill="#fff">PS</text>
            <path d="M9 26h8" stroke="#fff" strokeWidth="1.600" />
          </svg>
          <span className="mt-[6px] h-[5px] w-[9px] rounded-full bg-[#9ba0b0]" />
        </div>
      </div>

      <svg className="ml-auto h-[12px] w-[18px] shrink-0" viewBox="0 0 18 12" fill="none"><path d="M.5 10.500L9 1.500l8.500 9" stroke="#fff" strokeWidth="1.500" /></svg>
      <svg className="ml-[16px] h-6 w-6 shrink-0" viewBox="0 0 24 24">
        <path d="M11.500 0q4 3.500 11 3.500V11c0 7-5 11-11 13C5 22 0 18 0 11V3.500Q7.500 3.500 11.500 0z" fill="#1689d6" />
        <path d="M11.500 0v12H0V3.500Q7.500 3.500 11.500 0z" fill="#3cc1f5" />
        <circle cx="16.500" cy="17.500" r="7" fill="#0e8a1c" />
        <path d="M13 17.500l2.500 2.500 4.500-4.500" stroke="#fff" strokeWidth="1.600" fill="none" />
      </svg>
      <svg className="ml-[11px] h-6 w-6 shrink-0" viewBox="0 0 24 24" fill="none" stroke="#fff" strokeWidth="1.500">
        <path d="M1 12A11 11 0 0 1 22 7M22.500 0v7.500H15M1 24v-7.500h7.500M2 17.500a11 11 0 0 0 12 5.500" />
        <circle cx="18" cy="18" r="6" fill="#ff9b0a" stroke="none" />
      </svg>
      <svg className="ml-[12px] h-6 w-6 shrink-0" viewBox="0 0 24 24">
        <path d="M6 20a5.500 5.500 0 0 1-1-11A7.500 7.500 0 0 1 18.500 9a5.600 5.600 0 0 1 .5 11z" fill="#848a90" />
        <path d="M1 15q8-6 12-1l9 5q-1 1-3 1H6q-4 0-5-5z" fill="#a4a9ae" />
        <path d="M3 2l19.500 19.500" stroke="#1d2a36" strokeWidth="3" />
        <path d="M3 2.500l19 19" stroke="#fff" strokeWidth="1.500" />
      </svg>
      <svg className="ml-[12px] h-6 w-6 shrink-0" viewBox="0 0 24 24">
        <circle cx="14" cy="4" r="3.800" fill="#7b83eb" /><circle cx="20.500" cy="5" r="2.600" fill="#5059c9" />
        <path d="M14 9h10v7q-1 4-5 4z" fill="#5059c9" />
        <path d="M8 9h11v9q-1 5-6 5-4 0-5-4z" fill="#7b83eb" />
        <rect y="4.500" width="15" height="14.500" fill="#fff" />
        <path d="M4 8.500h7.500M7.700 8.500v7.500" stroke="#4b53bc" strokeWidth="2" />
      </svg>
      <svg className="ml-[12px] h-6 w-6 shrink-0" viewBox="0 0 24 24">
        <rect width="24" height="24" fill="#2a6b43" /><rect x="2" y="2" width="20" height="20" fill="#fff" />
        <rect x="4.500" y="4" width="15" height="15.500" fill="#df1016" />
        <path d="M6 16.500L12 6.500l6 10h-3L12 11.500 9 16.500z" fill="#fff" />
      </svg>
      <svg className="ml-[18px] h-6 w-6 shrink-0" viewBox="0 0 24 24" fill="none" stroke="#fff" strokeWidth="1.700">
        <path d="M15 2H3Q1 2 1 4v12q0 2 2 2h12q2 0 2-2M7 18v4.500M13 18v4.500M4 23h13" />
        <rect x="17.500" y="1" width="5.500" height="8" rx="1.500" /><path d="M17.500 5H23M20.500 9v14H17" />
      </svg>
      <svg className="ml-[12px] h-6 w-6 shrink-0" viewBox="0 0 24 24" fill="none" strokeWidth="1.700">
        <path d="M1 8.500h4L11 3.500v17l-6-5H1z" stroke="#fff" strokeLinejoin="round" />
        <path d="M13.500 8.500q2.500 3.500 0 7" stroke="#fff" />
        <path d="M16.500 5q4.500 7 0 14M19.500 2.500q6 9.500 0 19" stroke="#69727a" />
      </svg>
      <svg className="ml-[12px] h-6 w-6 shrink-0" viewBox="0 0 24 24" fill="none" stroke="#fff" strokeWidth="1.700">
        <path d="M10 5.500h9q2 0 2 2V16q0 2-2 2H6.500M21.500 10H23v4h-1.500" />
        <path d="M10 8.500h7.500v7H7v-4z" fill="#fff" stroke="none" />
        <path d="M1 4h6v3.500Q7 10 4 10T1 7.500zM2.500 1v3M5.500 1v3M4 10v9" fill="#fff" />
      </svg>
      <div className="ml-[30px] flex w-[77px] shrink-0 flex-col items-end pb-[1px] text-[17px] leading-[23px]">
        <Line w={75}>10:42 AM</Line>
        <Line w={84}>2/29/2024</Line>
      </div>
      <span className="mr-[30px] ml-[16px] flex h-6 w-6 shrink-0 items-center justify-center rounded-full bg-[#4cc2ff] text-[15px] text-[#16202a]">3</span>
    </div>
  );
}

export default function App() {
  return (
    <div className="h-[1080px] w-[1920px] overflow-hidden font-['Open_Sans','Noto_Sans',sans-serif]">
      <TabStrip />
      <Toolbar />
      <Bookmarks />
      <Page />
      <Taskbar />
    </div>
  );
}
